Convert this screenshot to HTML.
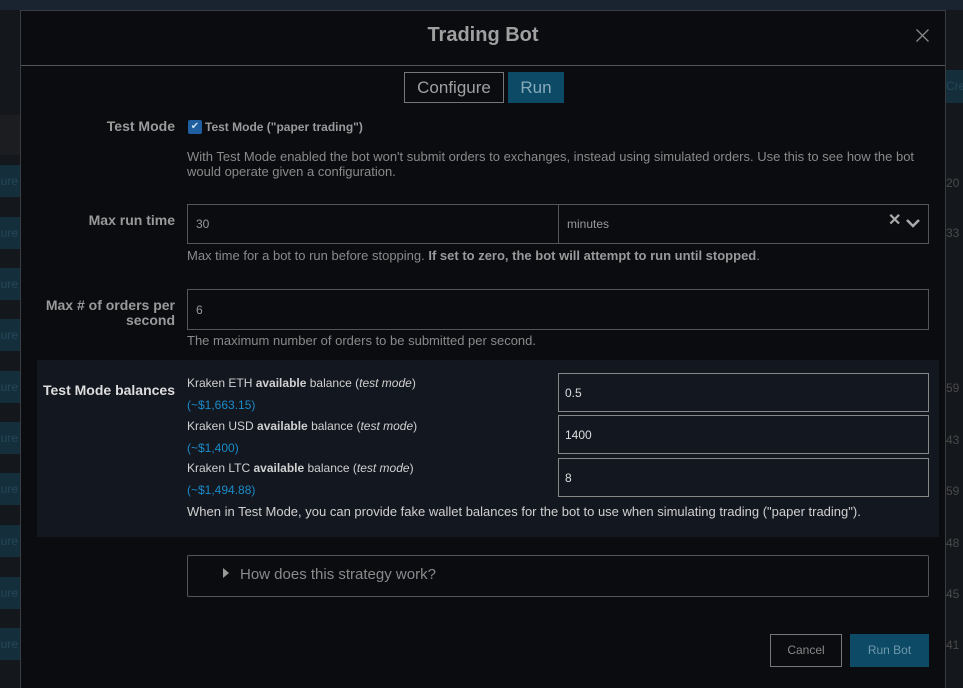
<!DOCTYPE html>
<html><head><style>
*{box-sizing:border-box;margin:0;padding:0}
html,body{width:963px;height:688px;overflow:hidden}
body{background:#14171b;font-family:"Liberation Sans",sans-serif;position:relative;color:#c8c8c8}
.abs{position:absolute}
.lb{left:0;width:20px;height:32px;background:#142e3b;color:#24485a;font-size:12px;line-height:32px;overflow:hidden;white-space:nowrap;text-indent:-6px}
.rn{left:946px;color:#4a4a4a;font-size:12px}
.modal{left:20px;top:10px;width:926px;height:678px;background:#0a0c10;border:1px solid #3a3d42;border-bottom:none;overflow:hidden}
.lbl{color:#9a9a9a;font-size:14px;font-weight:bold;text-align:right;width:154px;left:0}
.help{color:#8a8a8a;font-size:13px;left:166px}
.inp{border:1px solid #555;background:#0a0c10;color:#999;font-size:12px;padding-left:8px;display:flex;align-items:center}
.bal{color:#d0d0d0;font-size:12px;left:166px}
.blue{color:#1b8bc8;font-size:12px;left:166px}
.inp2{left:537px;width:371px;height:39px;border:1px solid #888;background:#131720;color:#ddd;font-size:12px;padding-left:6px;display:flex;align-items:center}
</style></head><body>
<div class="abs" style="left:0;top:0;width:963px;height:10px;background:#1a2430"></div>
<div class="abs" style="left:0;top:115px;width:20px;height:40px;background:#1b1d21"></div>
<div class="abs lb" style="top:165px">gure</div>
<div class="abs lb" style="top:217px">gure</div>
<div class="abs lb" style="top:268px">gure</div>
<div class="abs lb" style="top:319px">gure</div>
<div class="abs lb" style="top:371px">gure</div>
<div class="abs lb" style="top:422px">gure</div>
<div class="abs lb" style="top:473px">gure</div>
<div class="abs lb" style="top:525px">gure</div>
<div class="abs lb" style="top:577px">gure</div>
<div class="abs lb" style="top:628px">gure</div>
<div class="abs" style="left:946px;top:70px;width:17px;height:33px;background:#142e3b;color:#24485a;font-size:12px;line-height:33px">Cre</div>
<div class="abs rn" style="top:176px">20</div>
<div class="abs rn" style="top:226px">33</div>
<div class="abs rn" style="top:381px">59</div>
<div class="abs rn" style="top:433px">43</div>
<div class="abs rn" style="top:484px">59</div>
<div class="abs rn" style="top:536px">48</div>
<div class="abs rn" style="top:587px">45</div>
<div class="abs rn" style="top:638px">41</div>

<div class="abs modal">
 <div class="abs" style="left:0;top:0;width:924px;height:55px;border-bottom:1px solid #555"></div>
 <div class="abs" style="left:0;width:924px;top:13px;text-align:center;font-size:20px;font-weight:bold;color:#a0a0a0">Trading Bot</div>
 <div class="abs" style="left:895px;top:18px"><svg width="13" height="13"><path d="M0.5 0.5L12.5 12.5M12.5 0.5L0.5 12.5" stroke="#888" stroke-width="1.3"/></svg></div>
 <div class="abs" style="left:383px;top:61px;width:100px;height:31px;border:1px solid #777;color:#a0a0a0;font-size:17px;text-align:center;line-height:29px">Configure</div>
 <div class="abs" style="left:487px;top:61px;width:56px;height:31px;background:#0c4a66;color:#8ab;font-size:17px;text-align:center;line-height:31px">Run</div>

 <div class="abs lbl" style="top:107px">Test Mode</div>
 <div class="abs" style="left:167px;top:109px;width:14px;height:14px;background:#1f5fa0;border-radius:2px;color:#cde;font-size:10px;text-align:center;line-height:14px">&#x2714;</div>
 <div class="abs" style="left:184px;top:109px;color:#9a9a9a;font-size:12px;font-weight:bold">Test Mode ("paper trading")</div>
 <div class="abs help" style="top:138px;width:740px;line-height:15px">With Test Mode enabled the bot won't submit orders to exchanges, instead using simulated orders. Use this to see how the bot would operate given a configuration.</div>

 <div class="abs lbl" style="top:201px">Max run time</div>
 <div class="abs inp" style="left:166px;top:193px;width:372px;height:40px">30</div>
 <div class="abs inp" style="left:537px;top:193px;width:371px;height:40px">minutes</div>
 <div class="abs" style="left:867px;top:199px;color:#aaa;font-size:16px;font-weight:bold">&#x2715;</div>
 <div class="abs" style="left:885px;top:204px"><svg width="14" height="10"><path d="M1 2l6 6 6-6" stroke="#aaa" stroke-width="2.5" fill="none"/></svg></div>
 <div class="abs help" style="top:237px">Max time for a bot to run before stopping. <b style="color:#999">If set to zero, the bot will attempt to run until stopped</b>.</div>

 <div class="abs lbl" style="top:287px;line-height:15px">Max # of orders per second</div>
 <div class="abs inp" style="left:166px;top:278px;width:742px;height:41px">6</div>
 <div class="abs help" style="top:322px">The maximum number of orders to be submitted per second.</div>

 <div class="abs" style="left:16px;top:349px;width:902px;height:177px;background:#131720"></div>
 <div class="abs lbl" style="top:371px;color:#ddd">Test Mode balances</div>
 <div class="abs bal" style="top:365px">Kraken ETH <b>available</b> balance (<i>test mode</i>)</div>
 <div class="abs blue" style="top:387px">(~$1,663.15)</div>
 <div class="abs bal" style="top:408px">Kraken USD <b>available</b> balance (<i>test mode</i>)</div>
 <div class="abs blue" style="top:430px">(~$1,400)</div>
 <div class="abs bal" style="top:450px">Kraken LTC <b>available</b> balance (<i>test mode</i>)</div>
 <div class="abs blue" style="top:472px">(~$1,494.88)</div>
 <div class="abs inp2" style="top:362px">0.5</div>
 <div class="abs inp2" style="top:404px">1400</div>
 <div class="abs inp2" style="top:447px">8</div>
 <div class="abs bal" style="top:493px;font-size:13px">When in Test Mode, you can provide fake wallet balances for the bot to use when simulating trading ("paper trading").</div>

 <div class="abs" style="left:166px;top:544px;width:742px;height:42px;border:1px solid #555;border-radius:2px"></div>
 <div class="abs" style="left:202px;top:557px;width:0;height:0;border-left:6px solid #999;border-top:5px solid transparent;border-bottom:5px solid transparent"></div>
 <div class="abs" style="left:219px;top:555px;color:#8a8a8a;font-size:15px">How does this strategy work?</div>

 <div class="abs" style="left:749px;top:623px;width:72px;height:33px;border:1px solid #777;color:#888;font-size:12px;text-align:center;line-height:31px">Cancel</div>
 <div class="abs" style="left:829px;top:623px;width:79px;height:33px;background:#0c4a66;color:#6f98ac;font-size:12px;text-align:center;line-height:33px">Run Bot</div>
</div>
</body></html>
